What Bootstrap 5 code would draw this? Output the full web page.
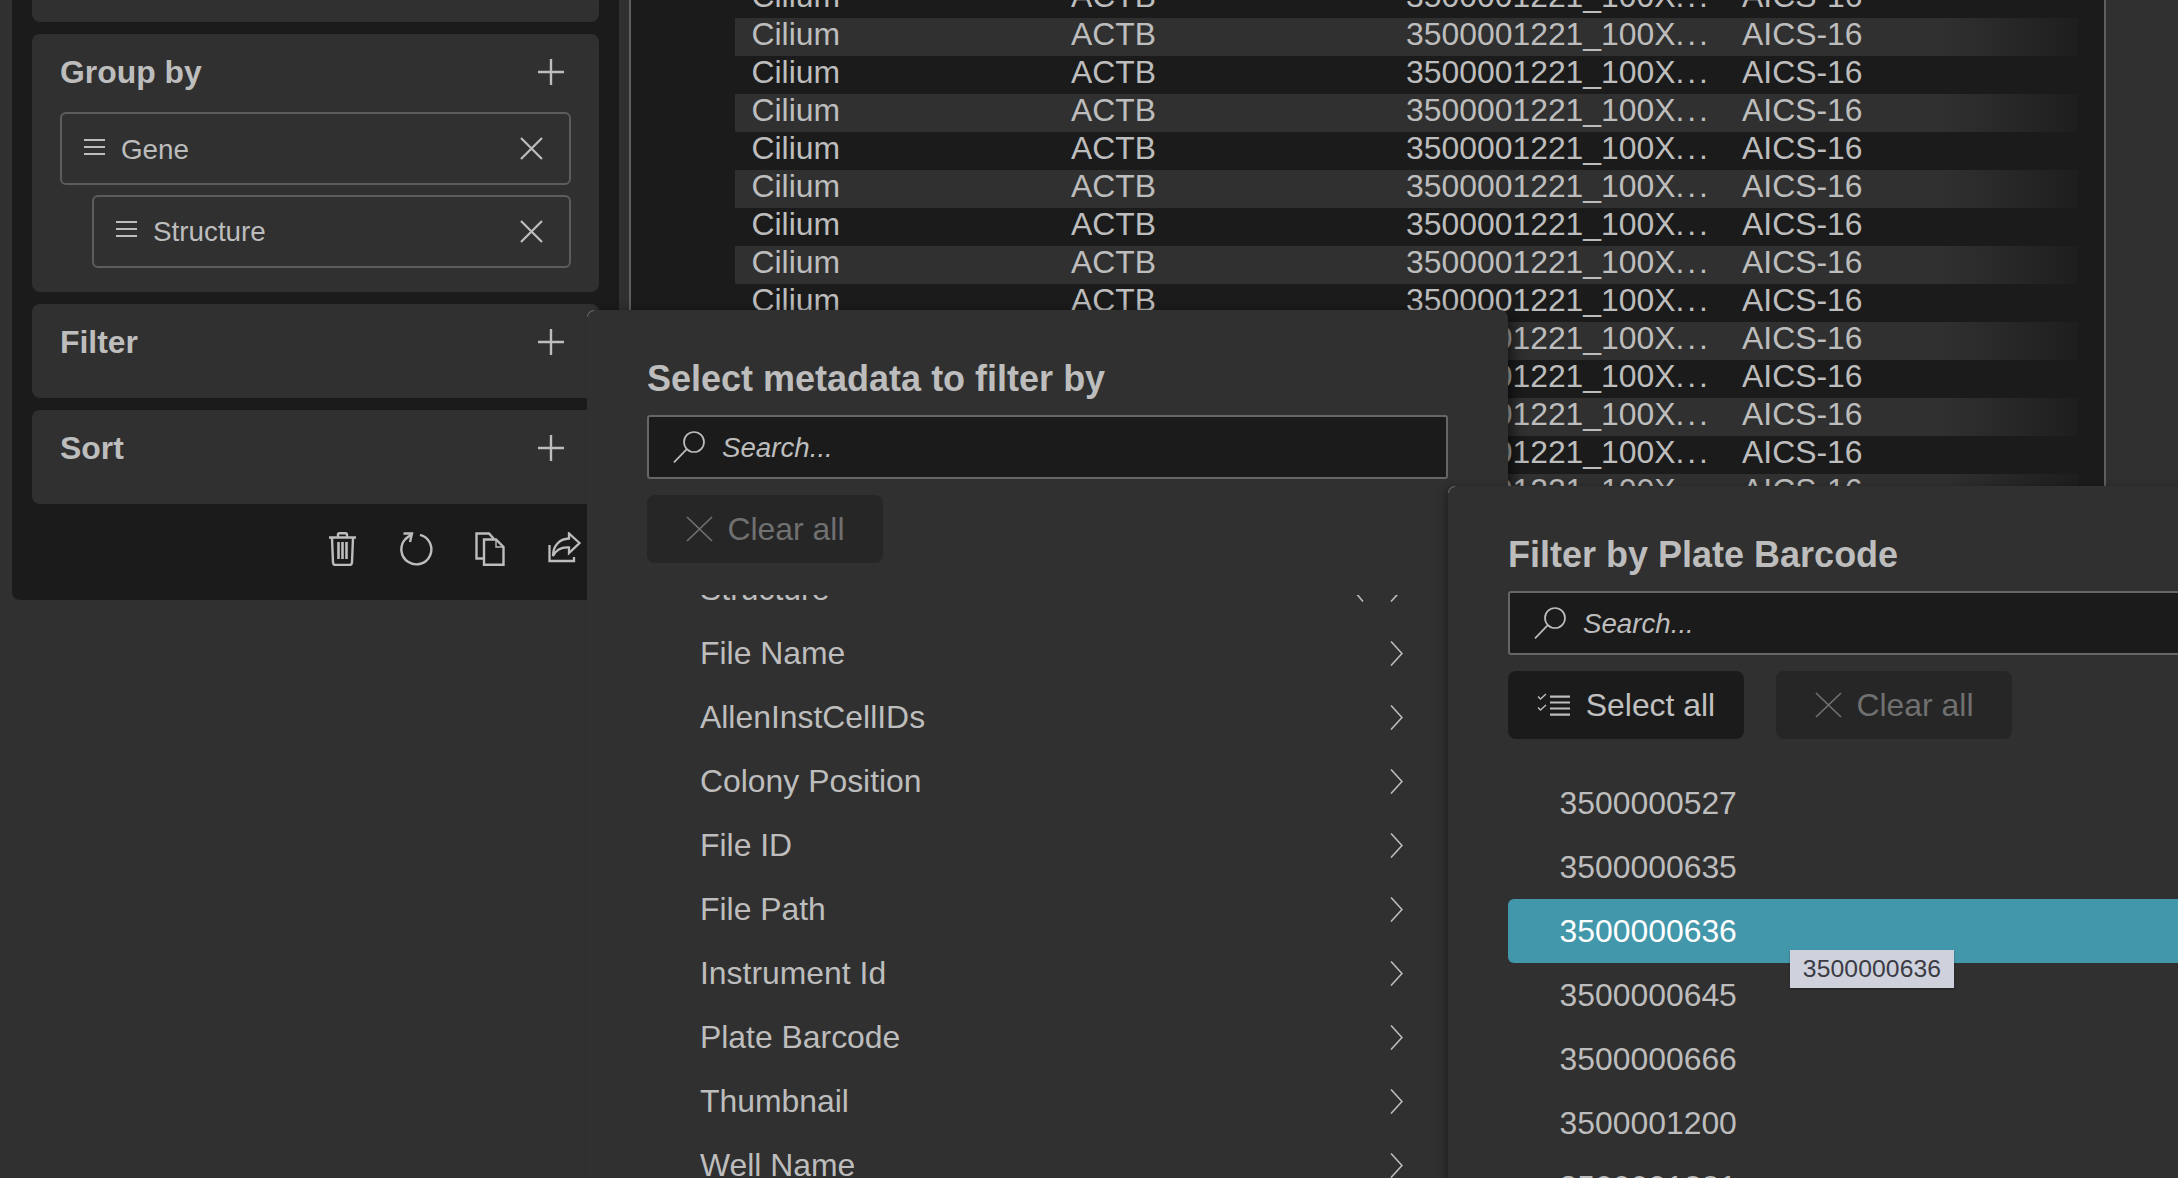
<!DOCTYPE html>
<html lang="en">
<head>
<meta charset="utf-8">
<title>Filter by Plate Barcode</title>
<link href="https://cdn.jsdelivr.net/npm/bootstrap@5.3.0/dist/css/bootstrap.min.css" rel="stylesheet">
<style>
html,body{height:100%;overflow:hidden}
body{background:#303030;color:#bdbdbd;font-family:"Liberation Sans",Arial,sans-serif;font-size:31.9px;line-height:38px}
svg{display:block;flex:none;fill:none;stroke:#bdbdbd}
.stage{position:relative;height:1178px;overflow:hidden}
.side{width:607px;height:600px;margin-left:12px;background:#1b1b1b;border-radius:0 0 8px 8px;padding:0 20px;flex:none}
.stub{height:22px;background:#303030;border-radius:0 0 8px 8px;margin-bottom:12px}
.sect{background:#303030;border-radius:8px;padding:18px 28px 0;margin-bottom:12px;height:94px}
.sect.tall{height:258px}
.sect-head{height:40px;font-weight:700;color:#bdbdbd}
.chip{height:73px;border:2px solid #5c5c5c;border-radius:6px;padding:0 26px 0 22px;font-size:27.8px;margin-top:9.5px}
.chip span{margin-top:2px}
.chip.first{margin-top:20px}
.chip.nested{margin-left:32px}
.chip-x{margin-left:auto}
.tools{padding:16px 0 0;margin-right:-2px}
.tool{width:74px}
.main{width:1477px;margin-left:10px;background:#1b1b1b;border-left:2px solid #5f5f5f;border-right:2px solid #5f5f5f;flex:none;overflow:hidden}
.rows{margin-top:-20.3px;padding-left:104px}
.trow{height:38px;width:1343px;line-height:33px;display:grid;grid-template-columns:319.5px 335px 336px auto;padding-left:16.5px;white-space:nowrap}
.trow.alt{background:linear-gradient(to right,#303030 0,#303030 90%,#1e1e1e 100%)}
.dots{letter-spacing:2.8px}
.pop{position:absolute;background:#303030;border-radius:8px;padding:0 60px}
.pop::before{content:"";position:absolute;left:0;top:0;width:7px;height:7px;border-left:1px solid #6a6a6a;border-top:1px solid #6a6a6a;border-top-left-radius:8px}
.pop-a{left:587px;top:310px;width:921px;height:1000px;padding-top:47px;box-shadow:8px 0 14px -4px rgba(0,0,0,.6)}
.pop-b{left:1448px;top:486px;width:800px;height:900px;padding-top:47px;box-shadow:-4px 0 10px -2px rgba(0,0,0,.35)}
.pop-title{font-size:36px;font-weight:700;line-height:44px;margin-bottom:14px;color:#bdbdbd}
.finder{height:64px;background:#1b1b1b;border:2px solid #666;border-radius:3px;padding-left:24px;gap:16px}
.finder .form-control{background:transparent;border:0;box-shadow:none;padding:2px 0 0;font-size:27.7px;font-style:italic;color:#bdbdbd;height:100%;border-radius:0}
.finder .form-control::placeholder{color:#bdbdbd;opacity:1}
.acts{margin-top:16px;gap:32px}
.act.btn{width:236px;height:68px;border:0;border-radius:8px;font-size:31.9px;line-height:38px;padding:0;gap:15px;color:#c0c0c0;background:#1b1b1b}
.act.off.btn{background:#262626;color:#707070}
.act.off svg{stroke:#707070}
.clip{margin-top:31.5px;height:700px;overflow:hidden}
.clip .list-group{margin-top:-37px}
.opts{--bs-list-group-bg:transparent;--bs-list-group-border-width:0}
.opts .list-group-item{height:64px;line-height:64px;padding:0 45px 0 53px;color:#bdbdbd;font-size:31.9px;border:0;background:transparent}
.clip .list-group-item span{margin-top:-2px}
.opts .chev-l{margin-right:26px;margin-left:auto}
.opts .chev-r{margin-left:auto}
.opts .chev-l + .chev-r{margin-left:0}
.opts-b{margin-top:31.6px}
.opts-b .list-group-item{padding-left:51.5px}
.opts .list-group-item.picked{background:#4297ab;color:#fff;border-radius:6px 0 0 6px}
.tip{position:absolute;left:342px;top:464px;width:164px;height:38px;background:#cfd2dd;color:#3b3b44;font-size:24.7px;line-height:38px;text-align:center;letter-spacing:.1px;box-shadow:0 1px 2px rgba(0,0,0,.3)}
</style>
</head>
<body>
<div class="stage d-flex">
  <aside class="side">
    <div class="stub"></div>
    <section class="sect tall">
      <div class="sect-head d-flex align-items-center justify-content-between">
        <span>Group by</span>
        <svg width="26" height="26" viewBox="0 0 26 26" stroke-width="2.4" style="margin-right:7px"><path d="M13 0V26M0 13H26"/></svg>
      </div>
      <div class="chip first d-flex align-items-center gap-3">
        <svg width="21" height="16" viewBox="0 0 21 16" stroke-width="2" style="margin-top:-4px"><path d="M0 1H21M0 8H21M0 15H21"/></svg>
        <span>Gene</span>
        <svg class="chip-x" width="23" height="23" viewBox="0 0 23 23" stroke-width="2.2"><path d="M1 1L22 22M22 1L1 22"/></svg>
      </div>
      <div class="chip nested d-flex align-items-center gap-3">
        <svg width="21" height="16" viewBox="0 0 21 16" stroke-width="2" style="margin-top:-4px"><path d="M0 1H21M0 8H21M0 15H21"/></svg>
        <span>Structure</span>
        <svg class="chip-x" width="23" height="23" viewBox="0 0 23 23" stroke-width="2.2"><path d="M1 1L22 22M22 1L1 22"/></svg>
      </div>
    </section>
    <section class="sect">
      <div class="sect-head d-flex align-items-center justify-content-between">
        <span>Filter</span>
        <svg width="26" height="26" viewBox="0 0 26 26" stroke-width="2.4" style="margin-right:7px"><path d="M13 0V26M0 13H26"/></svg>
      </div>
    </section>
    <section class="sect">
      <div class="sect-head d-flex align-items-center justify-content-between">
        <span>Sort</span>
        <svg width="26" height="26" viewBox="0 0 26 26" stroke-width="2.4" style="margin-right:7px"><path d="M13 0V26M0 13H26"/></svg>
      </div>
    </section>
    <div class="tools d-flex justify-content-end">
      <div class="tool d-flex justify-content-center">
        <svg width="27" height="34" viewBox="0 0 27 34" stroke-width="2.4"><path d="M0 5.5H27M9 5V2.5Q9 1.2 10.5 1.2H16.5Q18 1.2 18 2.5V5M3 6L4 30.5Q4.2 33 6.5 33H20.5Q22.8 33 23 30.5L24 6"/><path d="M9.5 10V27M13.5 10V27M17.5 10V27" stroke-width="2.6"/></svg>
      </div>
      <div class="tool d-flex justify-content-center">
        <svg width="34" height="34" viewBox="0 0 34 34" stroke-width="2.4"><path d="M21 2.8A15 15 0 1 1 6.5 7L12.5 2.2"/><path d="M4.5 1.5H13L11 10"/></svg>
      </div>
      <div class="tool d-flex justify-content-center">
        <svg width="30" height="34" viewBox="0 0 30 34" stroke-width="2.4"><path d="M9 26.5H1.5V1.5H14L19 7"/><path d="M9 7.5H21L28.5 15V32.7H9Z"/><path d="M21 8V15H28" stroke-width="1.4"/></svg>
      </div>
      <div class="tool d-flex justify-content-center">
        <svg width="33" height="31" viewBox="0 0 33 31" stroke-width="2.3"><path d="M1.5 13V29H26V25"/><path d="M31.5 11L21 1.5V6.5C11 7 5 14 5 24C8 18 14 15 21 15.5V21Z"/></svg>
      </div>
    </div>
  </aside>

  <main class="main">
    <div class="rows" id="rows"></div>
  </main>

  <div class="pop pop-a">
    <div class="pop-title">Select metadata to filter by</div>
    <div class="finder d-flex align-items-center">
      <svg width="33" height="32" viewBox="0 0 33 32" stroke-width="1.7"><circle cx="21" cy="11" r="10"/><path d="M13.8 18.2L1 31.3"/></svg>
      <input class="form-control" type="text" placeholder="Search...">
    </div>
    <div class="acts d-flex">
      <button type="button" class="btn act off d-flex align-items-center justify-content-center">
        <svg width="27" height="26" viewBox="0 0 27 26" stroke-width="1.7"><path d="M1 1L26 25M26 1L1 25"/></svg>
        <span>Clear all</span>
      </button>
    </div>
    <div class="clip">
      <div class="list-group list-group-flush opts">
        <div class="list-group-item d-flex align-items-center"><span>Structure</span>
          <svg class="chev-l" width="12" height="25" viewBox="0 0 12 25" stroke-width="1.6"><path d="M11 .5L1 12.5L11 24.5"/></svg>
          <svg class="chev-r" width="13" height="25" viewBox="0 0 13 25" stroke-width="1.6"><path d="M1 .5L12 12.5L1 24.5"/></svg></div>
        <div class="list-group-item d-flex align-items-center"><span>File Name</span><svg class="chev-r" width="13" height="25" viewBox="0 0 13 25" stroke-width="1.6"><path d="M1 .5L12 12.5L1 24.5"/></svg></div>
        <div class="list-group-item d-flex align-items-center"><span>AllenInstCellIDs</span><svg class="chev-r" width="13" height="25" viewBox="0 0 13 25" stroke-width="1.6"><path d="M1 .5L12 12.5L1 24.5"/></svg></div>
        <div class="list-group-item d-flex align-items-center"><span>Colony Position</span><svg class="chev-r" width="13" height="25" viewBox="0 0 13 25" stroke-width="1.6"><path d="M1 .5L12 12.5L1 24.5"/></svg></div>
        <div class="list-group-item d-flex align-items-center"><span>File ID</span><svg class="chev-r" width="13" height="25" viewBox="0 0 13 25" stroke-width="1.6"><path d="M1 .5L12 12.5L1 24.5"/></svg></div>
        <div class="list-group-item d-flex align-items-center"><span>File Path</span><svg class="chev-r" width="13" height="25" viewBox="0 0 13 25" stroke-width="1.6"><path d="M1 .5L12 12.5L1 24.5"/></svg></div>
        <div class="list-group-item d-flex align-items-center"><span>Instrument Id</span><svg class="chev-r" width="13" height="25" viewBox="0 0 13 25" stroke-width="1.6"><path d="M1 .5L12 12.5L1 24.5"/></svg></div>
        <div class="list-group-item d-flex align-items-center"><span>Plate Barcode</span><svg class="chev-r" width="13" height="25" viewBox="0 0 13 25" stroke-width="1.6"><path d="M1 .5L12 12.5L1 24.5"/></svg></div>
        <div class="list-group-item d-flex align-items-center"><span>Thumbnail</span><svg class="chev-r" width="13" height="25" viewBox="0 0 13 25" stroke-width="1.6"><path d="M1 .5L12 12.5L1 24.5"/></svg></div>
        <div class="list-group-item d-flex align-items-center"><span>Well Name</span><svg class="chev-r" width="13" height="25" viewBox="0 0 13 25" stroke-width="1.6"><path d="M1 .5L12 12.5L1 24.5"/></svg></div>
      </div>
    </div>
  </div>

  <div class="pop pop-b">
    <div class="pop-title">Filter by Plate Barcode</div>
    <div class="finder d-flex align-items-center">
      <svg width="33" height="32" viewBox="0 0 33 32" stroke-width="1.7"><circle cx="21" cy="11" r="10"/><path d="M13.8 18.2L1 31.3"/></svg>
      <input class="form-control" type="text" placeholder="Search...">
    </div>
    <div class="acts d-flex">
      <button type="button" class="btn act d-flex align-items-center justify-content-center">
        <svg width="34" height="24" viewBox="0 0 34 24"><path d="M13 3.7H33M13 9.5H33M13 15.5H33M13 21.7H33" stroke-width="2.2"/><path d="M1 3.5L3.5 6L9 1M1 14.5L3.5 17L9 12" stroke-width="1.4"/></svg>
        <span>Select all</span>
      </button>
      <button type="button" class="btn act off d-flex align-items-center justify-content-center">
        <svg width="27" height="26" viewBox="0 0 27 26" stroke-width="1.7"><path d="M1 1L26 25M26 1L1 25"/></svg>
        <span>Clear all</span>
      </button>
    </div>
    <div class="list-group list-group-flush opts opts-b">
      <div class="list-group-item">3500000527</div>
      <div class="list-group-item">3500000635</div>
      <div class="list-group-item picked">3500000636</div>
      <div class="list-group-item">3500000645</div>
      <div class="list-group-item">3500000666</div>
      <div class="list-group-item">3500001200</div>
      <div class="list-group-item">3500001221</div>
    </div>
    <div class="tip">3500000636</div>
  </div>
</div>
<script>
var h='';
for(var i=0;i<15;i++){
  h+='<div class="trow'+(i%2?' alt':'')+'"><span>Cilium</span><span>ACTB</span><span>3500001221_100X<span class="dots">...</span></span><span>AICS-16</span></div>';
}
document.getElementById('rows').innerHTML=h;
</script>
<script src="https://cdn.jsdelivr.net/npm/bootstrap@5.3.0/dist/js/bootstrap.bundle.min.js"></script>
</body>
</html>
